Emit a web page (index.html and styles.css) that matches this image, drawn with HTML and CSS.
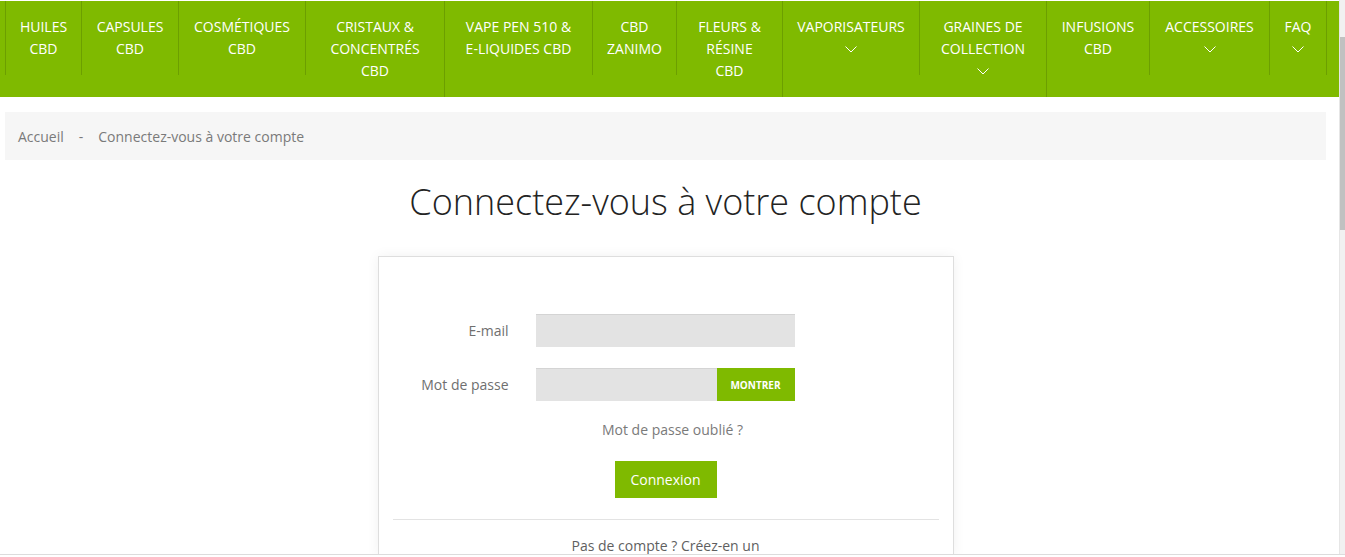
FILE: index.html
```html
<!DOCTYPE html>
<html lang="fr">
<head>
  <meta charset="UTF-8">
  <meta name="viewport" content="width=device-width, initial-scale=1.0">
  <title>Connectez-vous à votre compte</title>
  <link rel="stylesheet" href="styles.css">
</head>
<body>
  <div class="window">
    <div class="page">
      <nav class="topnav">
        <ul class="menu">
          <li class="m-huiles">Huiles<br>CBD</li>
          <li class="m-capsules">Capsules<br>CBD</li>
          <li class="m-cosmetiques">Cosmétiques<br>CBD</li>
          <li class="m-cristaux">Cristaux &amp;<br>Concentrés<br>CBD</li>
          <li class="m-vape">Vape pen 510 &amp;<br>E-liquides CBD</li>
          <li class="m-zanimo">CBD<br>Zanimo</li>
          <li class="m-fleurs">Fleurs &amp;<br>Résine<br>CBD</li>
          <li class="m-vapo">Vaporisateurs<span class="caret"><svg width="12" height="7" viewBox="0 0 12 7"><path d="M0.5 0.5 L6 6 L11.5 0.5" fill="none" stroke="#fff" stroke-width="1"/></svg></span></li>
          <li class="m-graines">Graines de<br>collection<span class="caret"><svg width="12" height="7" viewBox="0 0 12 7"><path d="M0.5 0.5 L6 6 L11.5 0.5" fill="none" stroke="#fff" stroke-width="1"/></svg></span></li>
          <li class="m-infusions">Infusions<br>CBD</li>
          <li class="m-accessoires">Accessoires<span class="caret"><svg width="12" height="7" viewBox="0 0 12 7"><path d="M0.5 0.5 L6 6 L11.5 0.5" fill="none" stroke="#fff" stroke-width="1"/></svg></span></li>
          <li class="m-faq">FAQ<span class="caret"><svg width="12" height="7" viewBox="0 0 12 7"><path d="M0.5 0.5 L6 6 L11.5 0.5" fill="none" stroke="#fff" stroke-width="1"/></svg></span></li>
        </ul>
      </nav>

      <div class="wrapper">
        <div class="breadcrumb">
          <span>Accueil</span>
          <span class="sep">-</span>
          <span>Connectez-vous à votre compte</span>
        </div>

        <h1 class="page-title">Connectez-vous à votre compte</h1>

        <section class="login-box">
          <form class="login-form">
            <label class="form-label">E-mail</label>
            <div class="field"><input type="text" class="form-input"></div>

            <label class="form-label">Mot de passe</label>
            <div class="field">
              <input type="password" class="form-input">
              <button type="button" class="btn-show">Montrer</button>
            </div>
          </form>
          <div class="forgot">Mot de passe oublié ?</div>
          <div class="submit-row"><button type="button" class="btn-login">Connexion</button></div>
          <hr class="divider">
          <div class="no-account">Pas de compte ? Créez-en un</div>
        </section>
      </div>
    </div>
    <div class="vscroll"><div class="thumb"></div></div>
  </div>
</body>
</html>
```

FILE: styles.css
```css
body{margin: 0; font-family: "Open Sans", "Liberation Sans", sans-serif; color: #777; background: #fff;}

.window{display: flex; height: 554px; overflow: hidden; border-bottom: 1px solid #dcdcdc;}
.page{flex: 1; min-width: 0;}

.vscroll{width: 5px; background: #f1f1f1; padding-top: 37px; border-left: 1px solid #e6e6e6;}
.vscroll .thumb{height: 193px; background: #c1c1c1;}

/* top menu */
.topnav{background: #7fba00; margin-top: 1px; height: 96px;}
.menu{display: flex; align-items: flex-start; margin: 0; padding: 0 0 0 5px; list-style: none;}
.menu li{box-sizing: border-box; flex: none; padding: 15px 0 15px; border-right: 1px solid #6c9f00; text-align: center; text-transform: uppercase; color: #fff; font-size: 14px; line-height: 22px; white-space: nowrap;}
.menu li:first-child{border-left: 1px solid #6c9f00;}
.caret{display: flex; justify-content: center; align-items: center; height: 22px;}
.caret svg{display: block;}

.m-huiles{width: 77px;}
.m-capsules{width: 97px;}
.m-cosmetiques{width: 127px;}
.m-cristaux{width: 139px;}
.m-vape{width: 148px;}
.m-zanimo{width: 84px;}
.m-fleurs{width: 106px;}
.m-vapo{width: 137px;}
.m-graines{width: 127px;}
.m-infusions{width: 103px;}
.m-accessoires{width: 120px;}
.m-faq{width: 57px;}

/* content */
.wrapper{padding: 0 13px 0 5px;}

.breadcrumb{margin-top: 15px; height: 48px; background: #f6f6f6; display: flex; align-items: center; padding: 0 13px; font-size: 14px; color: #7a7a7a;}
.breadcrumb .sep{margin: 0 15px;}

.page-title{margin: 20px 0 33px; text-align: center; font-weight: 300; font-size: 36px; line-height: 43px; color: #232323;}

.login-box{width: 546px; margin: 0 auto; border: 1px solid #dedede; box-shadow: 0 0 12px rgba(0,0,0,0.06); padding: 57px 14px 0;}

.login-form{display: grid; grid-template-columns: 116px 259px; column-gap: 27px; row-gap: 21px; align-items: center;}
.form-label{text-align: right; font-size: 14px; color: #6f6f6f;}
.field{display: flex; height: 33px;}
.form-input{flex: 1; min-width: 0; border: none; border-top: 1px solid #d4d4d4; background: #e3e3e3; margin: 0; padding: 0 10px; outline: none;}
.btn-show{width: 78px; border: none; margin: 0; background: #7fba00; color: #fff; font-family: inherit; font-size: 10px; font-weight: 700; text-transform: uppercase;}

.forgot{margin-top: 20px; text-align: center; font-size: 14px; line-height: 18px; color: #7a7a7a; padding-left: 14px;}

.submit-row{margin-top: 22px; text-align: center;}
.btn-login{width: 102px; height: 37px; padding: 0; border: none; background: #7fba00; color: #fff; font-family: inherit; font-size: 14px;}

.divider{margin: 21px 0 0; border: 0; border-top: 1px solid #e3e3e3;}

.no-account{margin-top: 16px; text-align: center; font-size: 14px; line-height: 20px; color: #5f5f5f;}
```
